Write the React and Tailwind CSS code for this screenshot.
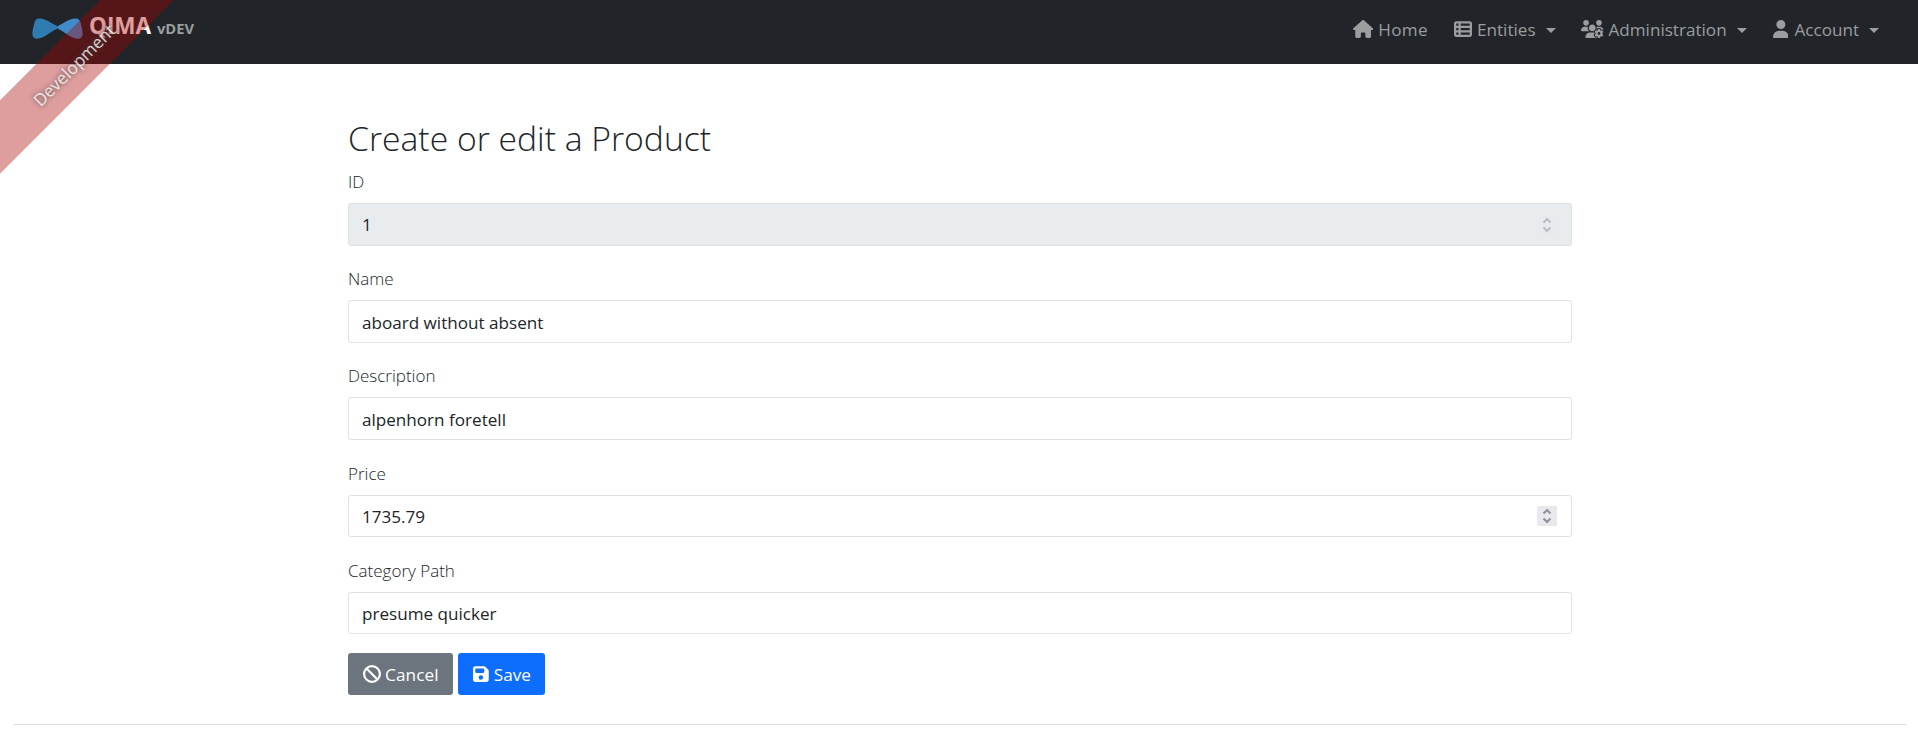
import { FaHouse, FaTableList, FaUsersGear, FaUser, FaBan, FaFloppyDisk } from "react-icons/fa6";

function Caret() {
  return <span className="ml-[10px] mt-[2px] h-0 w-0 border-x-[5px] border-t-[5px] border-x-transparent border-t-[#9b9d9f]" />;
}

function NavItem({ icon, label, className, textClass, caret }) {
  return (
    <a className={`flex h-6 shrink-0 items-center ${className}`}>
      {icon}
      <span className={`whitespace-nowrap pt-px leading-6 ${textClass}`}>{label}</span>
      {caret && <Caret />}
    </a>
  );
}

function Spinner({ disabled }) {
  return (
    <span className={`flex h-5 w-5 items-center justify-center bg-[#e9e9ed] ${disabled ? "mt-px opacity-50" : ""}`}>
      <svg viewBox="0 0 20 20" className="h-5 w-5" fill="none" stroke="#8f8f9d" strokeWidth="2">
        <path d="M6.5 7.5 10 4l3.5 3.5M6.5 12.5 10 16l3.5-3.5" />
      </svg>
    </span>
  );
}

function Field({ label, value, number, disabled }) {
  return (
    <div className="h-[97.2px]">
      <label className="block h-6 pt-[0.7px] text-[17px] font-light leading-6">{label}</label>
      <div className={`mt-[9.7px] flex h-[42.6px] items-center justify-between rounded-[3px] border border-[#dee2e6] pl-[13px] pr-[14px] ${disabled ? "bg-[#e9ecef]" : "bg-white"}`}>
        <span className="pt-[2.4px] leading-6">{value}</span>
        {number && <Spinner disabled={disabled} />}
      </div>
    </div>
  );
}

export default function App() {
  return (
    <div className="relative h-[734px] overflow-hidden bg-white font-['Open_Sans','Noto_Sans',sans-serif] text-[17.1px] text-[#212529]">
      <header className="flex h-16 items-start bg-[#212529] pl-8 pr-[39px] text-[#9b9d9f]">
        <div className="flex items-start">
          <svg viewBox="0 0 51 22" className="mt-[18px] h-[22px] w-[51px]">
            <path d="M2.5 4.5C3.2 1.3 5 .2 8 .4 14 1 19 4.500 25.500 8.300V10.500C19 13.500 14 18.500 8 20.300 3.500 21.500.4 20 .4 16 .4 12 1.500 8.500 2.500 4.500Z" fill="#2f7cb3" />
            <path d="M48.500 4.500C47.800 1.300 46 .2 43 .4 37 1 32 4.500 25.500 8.300V10.500C32 13.500 37 18.500 43 20.300 47.500 21.500 50.600 20 50.600 16 50.600 12 49.500 8.500 48.500 4.500Z" fill="#428bca" />
          </svg>
          <span className="ml-[6px] mt-[10px] w-[68px] text-[22.5px] font-bold leading-8 text-white">QIMA</span>
          <span className="mt-[16px] text-[14.7px] font-bold leading-6 text-[#9b9d9f]">vDEV</span>
        </div>
        <nav className="ml-auto mt-[17px] flex">
          <NavItem className="w-[101px]" textClass="ml-[5px] tracking-[0.3px]" label="Home" icon={<FaHouse className="h-[18px] w-[20.25px]" />} />
          <NavItem className="w-[127px]" textClass="ml-[5px]" label="Entities" caret icon={<FaTableList className="h-[18px] w-[18px]" />} />
          <NavItem className="w-[191.7px]" textClass="ml-[5px]" label="Administration" caret icon={<FaUsersGear className="h-[18px] w-[22.5px]" />} />
          <NavItem className="w-[106.3px]" textClass="ml-[6px]" label="Account" caret icon={<FaUser className="h-[18px] w-[15.75px]" />} />
        </nav>
      </header>

      <main className="ml-[348px] w-[1223.6px] pt-[54px]">
        <h2 className="h-[51.3px] text-[33.7px] font-light leading-10">Create or edit a Product</h2>
        <form>
          <Field label="ID" value="1" number disabled />
          <Field label="Name" value="aboard without absent" />
          <Field label="Description" value="alpenhorn foretell" />
          <Field label="Price" value="1735.79" number />
          <Field label="Category Path" value="presume quicker" />
        </form>
        <div className="-mt-[2.3px] flex gap-[5px] text-[17.2px] text-white">
          <button type="button" className="flex h-[42px] w-[105px] items-center rounded-[3px] bg-[#6c757d] pl-[15px]">
            <FaBan className="h-[18px] w-[18px]" />
            <span className="ml-1 pt-px tracking-[0.1px]">Cancel</span>
          </button>
          <button type="button" className="flex h-[42px] w-[87px] items-center rounded-[3px] bg-[#0d6efd] pl-[15px]">
            <FaFloppyDisk className="h-[18px] w-[15.75px]" />
            <span className="ml-[5px] pt-px">Save</span>
          </button>
        </div>
      </main>
      <hr className="ml-[14px] mr-3 mt-[29px] border-t border-[#dedfe0]" />

      <div className="absolute left-[-76.900px] top-[38.100px] flex h-[52px] w-[300px] -rotate-45 items-center justify-center bg-[rgba(170,0,0,0.38)] pt-[3px] text-[rgba(255,255,255,0.8)] [text-shadow:0_0_5px_#444]">
        Development
      </div>
    </div>
  );
}
